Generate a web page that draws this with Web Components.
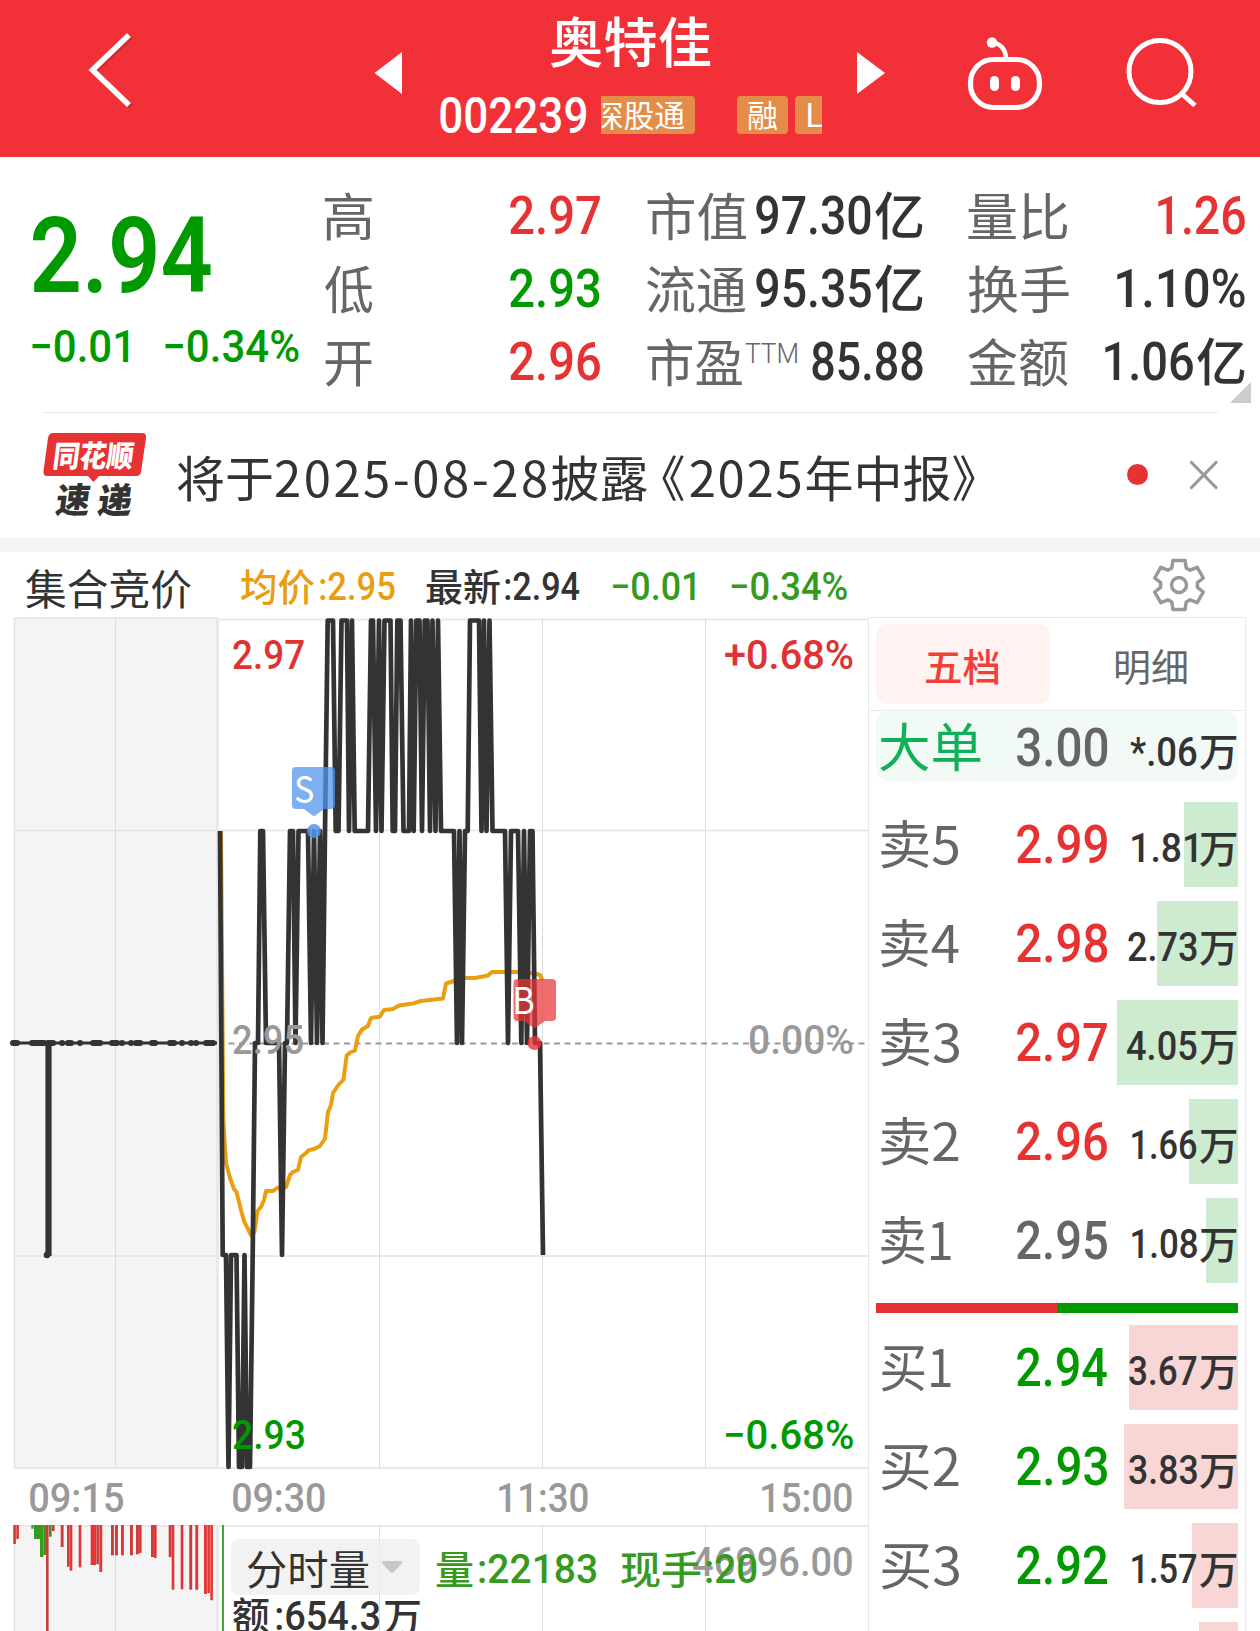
<!DOCTYPE html>
<html lang="zh-CN">
<head>
<meta charset="utf-8">
<title>奥特佳 002239</title>
<style>
  html, body { margin: 0; background: #fff; }
  body { width: 1260px; height: 1631px; overflow: hidden; }
</style>
</head>
<body>
<stock-page></stock-page>
<script>
const RED = '#e63232', GREEN = '#009a00', INK = '#333', GREY = '#666';
const FONTS = {
  num: 'Roboto, "Noto Sans CJK SC", sans-serif',
  cjk: '"Noto Sans CJK SC", sans-serif'
};
const ctx = document.createElement('canvas').getContext('2d');

/* Text condensed to an ink width; its box is the cap height, baseline at the bottom. */
class InkText extends HTMLElement {
  connectedCallback() {
    const a = (n, d) => this.getAttribute(n) ?? d;
    const h = +a('h'), size = +a('size', h / 0.711);
    const weight = a('weight', '500'), family = FONTS[a('font', 'num')];
    ctx.font = `${weight} ${size}px ${family}`;
    const m = ctx.measureText(this.textContent);
    const ink = m.actualBoundingBoxLeft + m.actualBoundingBoxRight;
    const w = +a('w', ink), k = w / ink;
    const base = size / 2 + (m.fontBoundingBoxAscent - m.fontBoundingBoxDescent) / 2;
    const at = a('at') ? a('at').split(',') : null;
    this.attachShadow({ mode: 'open' }).innerHTML = `<style>
      :host { display: block; flex: none; width: ${w}px; height: ${h}px; color: ${a('color', 'inherit')};
        ${at ? `position: absolute; left: ${at[0]}px; top: ${at[1]}px;` : ''} }
      .t { display: block; width: max-content; white-space: nowrap; font: ${weight} ${size}px/${size}px ${family};
        transform-origin: 0 0;
        transform: translate(${m.actualBoundingBoxLeft * k}px, ${h - base + +a('dy', 0)}px) scaleX(${k}) skewX(${a('skew', 0)}deg); }
    </style><span class="t"><slot></slot></span>`;
  }
}
customElements.define('ink-text', InkText);

const define = (name, render) => customElements.define(name, class extends HTMLElement {
  connectedCallback() { this.attachShadow({ mode: 'open' }).innerHTML = render(this); }
});

define('tag-chip', () => `<style>
  :host { display: flex; flex: none; box-sizing: border-box; height: 38px; padding: 7px 0 0 11px; border-radius: 4px;
    background: #e48d48; color: #fff; }
</style><slot></slot>`);

define('title-bar', () => `<style>
  :host { display: flex; height: 157px; background: #f13038; color: #fff; }
  svg { display: block; flex: none; }
  .mid { width: 455px; display: flex; flex-direction: column; padding-top: 16px; box-sizing: border-box; }
  .name { margin-left: 148px; }
  .code { display: flex; margin: 29px 0 0 38px; }
  .tags { display: flex; width: 221px; overflow: hidden; margin-left: 15px; }
</style>
<svg width="402" height="157" fill="none">
  <path d="M131 36.500L95 71.500L131 106.500" stroke="#a81e26" stroke-opacity=".45" stroke-width="5"/>
  <path d="M129 35L92.500 70L129 105" stroke="#fff" stroke-width="5.600"/>
  <path d="M402 52V94L374.500 73z" fill="#fff"/>
</svg>
<div class="mid">
  <ink-text class="name" w="161" h="51" size="54" font="cjk" dy="-3.500">奥特佳</ink-text>
  <div class="code">
    <ink-text w="146" h="36" style="margin-top:2px">002239</ink-text>
    <div class="tags">
      <tag-chip style="width:112px;margin-left:-18px"><ink-text w="91" h="25" size="31" weight="400" font="cjk" dy="-1">深股通</ink-text></tag-chip>
      <tag-chip style="width:51px;margin-left:42px"><ink-text w="29" h="25" size="31" weight="400" font="cjk" dy="-1">融</ink-text></tag-chip>
      <tag-chip style="width:110px;margin-left:7px;padding-left:13px"><ink-text w="16" h="24" size="32" weight="350" font="cjk">L</ink-text></tag-chip>
    </div>
  </div>
</div>
<svg width="403" height="157" viewBox="857 0 403 157" fill="none" stroke="#fff">
  <path d="M857 52V94L885 73z" fill="#fff" stroke="none"/>
  <rect x="970.500" y="59.500" width="69" height="48" rx="23" stroke-width="5.200"/>
  <path d="M1006 59C1006 50 1001 44 994 43" stroke-width="4.500"/>
  <circle cx="992" cy="42.500" r="5.200" fill="#fff" stroke="none"/>
  <rect x="990" y="76" width="9" height="15" rx="4.500" fill="#fff" stroke="none"/>
  <rect x="1011" y="76" width="9" height="15" rx="4.500" fill="#fff" stroke="none"/>
  <circle cx="1160" cy="71.500" r="31" stroke-width="5"/>
  <path d="M1182 94L1195 105.500" stroke-width="5"/>
</svg>`);

define('quote-panel', () => {
  const v = (w, c, t, unit = '') => `<div class="v"><ink-text w="${w}" h="37.500" color="${c}">${t}</ink-text>${unit}</div>`;
  const yi = '<ink-text w="48" h="38" size="51" font="cjk" dy="1.500" style="margin-left:4px">亿</ink-text>';
  const l = (w, t) => `<ink-text w="${w}" h="38" size="51" weight="400" font="cjk" color="${GREY}" dy="2">${t}</ink-text>`;
  const row = (a, b) => `<div class="r">${a}${b}</div>`;
  return `<style>
  :host { display: flex; height: 255px; padding-left: 32px; color: ${INK}; }
  .now { width: 293px; padding-top: 60px; color: ${GREEN}; flex: none; }
  .chg { display: flex; gap: 37px; margin-top: 38px; }
  .c { flex: none; display: flex; flex-direction: column; gap: 35px; padding-top: 39px; }
  .r { display: flex; justify-content: space-between; align-items: flex-end; height: 38px; }
  .v, .l { display: flex; align-items: flex-end; }
  svg { align-self: flex-end; margin: 0 0 9px -15px; }
</style>
<div class="now">
  <ink-text w="179" h="75" weight="600" dy="1">2.94</ink-text>
  <div class="chg"><ink-text w="96" h="32">−0.01</ink-text><ink-text w="134" h="32">−0.34%</ink-text></div>
</div>
<div class="c" style="width:275px">
  ${row(l(47, '高'), v(90, RED, '2.97'))}${row(l(48, '低'), v(90, GREEN, '2.93'))}${row(l(47, '开'), v(90, RED, '2.96'))}
</div>
<div class="c" style="width:276px;margin-left:47px">
  ${row(l(99, '市值'), v(115, INK, '97.30', yi))}
  ${row(l(99, '流通'), v(115, INK, '95.35', yi))}
  ${row(`<div class="l">${l(95, '市盈')}<ink-text w="52" h="19" weight="350" color="${GREY}" style="margin:0 0 17px 3px">TTM</ink-text></div>`, v(111, INK, '85.88'))}
</div>
<div class="c" style="width:277px;margin-left:45px">
  ${row(l(100, '量比'), v(87, RED, '1.26'))}
  ${row(l(101, '换手'), v(128, INK, '1.10%'))}
  ${row(l(100, '金额'), v(88, INK, '1.06', yi))}
</div>
<svg width="21" height="21"><path d="M21 0V21H0z" fill="#ccc"/></svg>`;
});

define('news-row', () => `<style>
  :host { display: flex; height: 125px; margin: 0 42px; border-top: 1.500px solid #ebebeb; box-sizing: border-box; height: 126px; }
  .logo { flex: none; width: 135px; display: grid; }
  .logo > * { grid-area: 1 / 1; }
  svg { display: block; }
  .icons { margin-left: auto; }
  .d { letter-spacing: 2.500px; }
  .q { margin-left: -12px; }
  .y { letter-spacing: 1.800px; margin-left: 3px; }
</style>
<div class="logo">
  <svg width="120" height="100" viewBox="42 413 120 100"><path d="M53 433H142Q147 433 146 438L141 472Q140.500 476 136 476H99L93.500 482L88 476H47Q43 476 43.500 471L48 438Q49 433 53 433z" fill="#e63232"/></svg>
  <ink-text w="79" h="25" size="30" weight="900" font="cjk" skew="-8" color="#fff" style="margin:30px 0 0 15px" dy="-1">同花顺</ink-text>
  <ink-text w="76" h="28" size="35" weight="900" font="cjk" skew="-8" color="#333" style="margin:73px 0 0 17px" dy="-1">速 递</ink-text>
</div>
<ink-text h="36" size="49" weight="400" font="cjk" color="${INK}" style="margin-top:48px">将于<span class="d">2025-08-28</span>披露<span class="q">《</span><span class="y">2025</span>年中报》</ink-text>
<svg class="icons" width="100" height="120" viewBox="1118 413 100 120">
  <circle cx="1137.500" cy="474.500" r="10.500" fill="#e63232"/>
  <path d="M1191.500 462.500L1216 487.500M1216 462.500L1191.500 487.500" stroke="#999" stroke-width="3.200" stroke-linecap="round"/>
</svg>`);

const gear = () => {
  const p = [];
  for (let i = 0; i < 6; i++) {
    for (const [d, r] of [[-23, 18.5], [-14, 25.3], [14, 25.3], [23, 18.5]]) {
      const t = (i * 60 + d) * Math.PI / 180;
      p.push((27 + r * Math.sin(t)).toFixed(1) + ' ' + (27 - r * Math.cos(t)).toFixed(1));
    }
  }
  return `M${p.join('L')}z`;
};

define('info-row', () => `<style>
  :host { display: flex; box-sizing: border-box; height: 79px; border-top: 14px solid #f4f4f4; color: ${INK}; }
  ink-text { margin-top: 21px; }
  svg { margin: 6px 54px 0 auto; overflow: visible; }
</style>
<ink-text w="165" h="30" size="42" font="cjk" weight="400" style="margin:22px 0 0 26px" dy="1">集合竞价</ink-text>
<ink-text w="74" h="28" size="38" font="cjk" weight="450" color="#e89e10" style="margin-left:50px">均价</ink-text>
<ink-text w="75" h="27.500" color="#e89e10" style="margin-left:5px">:2.95</ink-text>
<ink-text w="74" h="28" size="38" font="cjk" weight="450" style="margin-left:31px">最新</ink-text>
<ink-text w="75" h="27.500" style="margin-left:5px">:2.94</ink-text>
<ink-text w="83" h="27.500" color="#359a1e" style="margin-left:32px">−0.01</ink-text>
<ink-text w="116" h="27.500" color="#359a1e" style="margin-left:36px">−0.34%</ink-text>
<svg width="54" height="54" fill="none" stroke="#999" stroke-width="3.500" stroke-linejoin="round"><path d="${gear()}"/><circle cx="27" cy="27" r="7.500"/></svg>`);

/* Price levels of the minute chart and the series drawn on them. */
const Y = { T: 620.5, M: 831, Z: 1043, L: 1255, B: 1467 };
const PRICE = '220M 222.7L 226L 228.5B 231L 236.5L 239B 242B 244.5L 247B 250B 252.7L 255Z 258Z 260.3M 263M 266Z 279Z 282L 285Z 287Z 290M 293M 295.5Z 298.5M 308M 311Z 314M 317Z 320M 322.5Z 325M 327.7T 333T 335.7M 338.5M 341.5T 347T 349M 352T 354.7M 368M 371T 373T 376M 379T 381.5M 384.5T 390.5T 392.7M 395M 397.3T 400.5T 403.5M 409M 411T 413.7M 416.3T 419.5T 422M 424.7T 427.5T 430M 432.5T 435.5M 438T 441M 454M 457Z 459.5M 462Z 465M 467.7M 470T 479T 481.5M 484T 486.5M 489.5T 492.5M 505M 508Z 511M 518M 521.3Z 524M 527Z 530M 532.5M 535Z 540Z 543L'
  .split(' ').map(s => s.slice(0, -1) + ' ' + Y[s.slice(-1)]).join('L');
const AVG = '221 831L223.300 1120L226 1163L230 1178L234 1189L236.500 1192L241 1210L244 1221L251 1235L254.500 1232L257.500 1211L261 1207L264 1200L266 1191L273 1191L277 1188L286 1187L290 1175L293 1172L298 1170L301 1157L306 1153L309 1150L314 1149L320 1146L325 1138.500L328 1112L331 1105L333 1093L338 1085.500L343.500 1079.500L346.700 1055.500L350 1052.500L355 1050.500L358 1036L362 1029.500L368 1026L371 1018L380 1016.500L384 1010L393 1009L399 1005.500L413 1003.500L421 1001L443 998.500L446 983.500L454 981L466 978L475 978L488 975.500L492 972L497 972L520 972L535 973.500L540 975L542.500 980';
const TICKS = '13-17 32-44 48-53 62-62 68-71 80-80 93-100 112-117 122-122 131-131 136-140 152-155 170-174 182-182 191-191 196-196 206-213'
  .split(' ').map(s => { const [a, b] = s.split('-'); return `M${a} 1043H${+b + .1}`; }).join('');
const VOL = 'r40:49:252 R49:58:237 g94:102:206 G102:120:237 G120:130:291 G130:138:285 r138:147:513 g147:156:230 r156:165:213 r182:192:261 r201:210:320 R209:218:332 R236:245:322 R272:289:315 r289:298:313 R298:308:336 r333:343:286 r345:355:286 R363:373:286 r390:400:286 r408:418:283 R417:426:279 r453:463:291 R462:471:294 r506:516:291 R515:524:389 R542:551:388 r568:578:389 R586:596:389 R612:622:402 R622:631:399 R631:640:421'
  .split(' ').map(s => {
    const [a, b, c] = s.slice(1).split(':').map(Number);
    const fill = { r: '#c93c3a', R: '#e63434', g: '#3a922c', G: '#359c1e' }[s[0]];
    return `<rect x="${(a / 3).toFixed(1)}" y="1525" width="${((b - a) / 3 - (s[0] === 'G' ? 0 : .4)).toFixed(1)}" height="${(c / 3 - 65).toFixed(1)}" fill="${fill}"/>`;
  }).join('');

define('minute-chart', () => `<style>
  :host { display: block; position: relative; flex: none; width: 868px; height: 1014px; color: #999; }
  svg { display: block; }
  .sel { position: absolute; left: 231px; top: 922px; width: 189px; height: 56px; border-radius: 8px; background: rgba(236,236,236,.7);
    display: flex; align-items: center; gap: 12px; padding-left: 16px; box-sizing: border-box; }
</style>
<svg width="868" height="1014" viewBox="0 617 868 1014" fill="none">
  <path d="M14 618H218V1468H14zM14 1525H218V1640H14z" fill="#f4f4f4"/>
  <path d="M14 618H218M218 619.500H868M14 1468H868M218 1526H868M14 1526H218" stroke="#e9e9e9" stroke-width="2"/>
  <path d="M14 830.500H868M14 1256H868M14.500 618V1468M14.500 1525V1631" stroke="#e4e4e4" stroke-width="1.500"/>
  <path d="M217.500 618V1468M217.500 1525V1631" stroke="#e9e9e9" stroke-width="3"/>
  <path d="M115.500 618V1468M379.500 619V1468M542.500 619V1468M705.500 619V1468M115.500 1525V1631M379.500 1525V1631M542.500 1525V1631M705.500 1525V1631" stroke="#ddd"/>
  <path d="M219 1043.500H868" stroke="#999" stroke-width="1.800" stroke-dasharray="6 4.500" stroke-dashoffset="1"/>
  <path d="M${AVG}" stroke="#e8a012" stroke-width="4" stroke-linejoin="round"/>
  <path d="M${PRICE}" stroke="#333" stroke-width="4.700" stroke-linejoin="round"/>
  <path d="M13 1043H217" stroke="#333" stroke-width="3"/>
  <path d="${TICKS}" stroke="#333" stroke-width="6" stroke-linecap="round"/>
  <path d="M48.500 1043V1256" stroke="#333" stroke-width="6.200"/><circle cx="47" cy="1255" r="3.300" fill="#333"/>
  ${VOL}
  <path d="M223 1525V1631" stroke="#359c1e" stroke-width="1.800"/>
</svg>
<ink-text at="232.500,23" w="71" h="29" color="#df3232">2.97</ink-text>
<ink-text at="725,23" w="128" h="29" color="#df3232">+0.68%</ink-text>
<ink-text at="232.500,408" w="70" h="29">2.95</ink-text>
<ink-text at="750,408" w="103" h="29">0.00%</ink-text>
<ink-text at="232.500,803" w="71" h="29" color="${GREEN}">2.93</ink-text>
<ink-text at="725.500,803" w="127.500" h="29" color="${GREEN}">−0.68%</ink-text>
<svg width="868" height="1014" viewBox="0 617 868 1014" style="position:absolute;left:0;top:0">
  <g fill="#5295eb"><path d="M296 767H331Q335 767 335 771V805Q335 809 331 809H324L314 816.500L304 809H296Q292 809 292 805V771Q292 767 296 767z" opacity=".75"/><circle cx="314" cy="831" r="7" opacity=".85"/></g>
  <g fill="#e93438"><path d="M517.500 979H552Q556 979 556 983V1017Q556 1021 552 1021H545L534.500 1028.500L524 1021H517.500Q513.500 1021 513.500 1017V983Q513.500 979 517.500 979z" opacity=".72"/><circle cx="534.500" cy="1043" r="7" opacity=".8"/></g>
</svg>
<ink-text at="294.500,158.500" w="18.500" h="27" size="37" weight="400" font="cjk" color="#fff">S</ink-text>
<ink-text at="514.500,370" w="18.500" h="27" size="37" weight="400" font="cjk" color="#fff">B</ink-text>
<ink-text at="30,866" w="93" h="29.500">09:15</ink-text>
<ink-text at="233,866" w="92" h="29.500">09:30</ink-text>
<ink-text at="499,866" w="89" h="29.500">11:30</ink-text>
<ink-text at="762,866" w="90" h="29.500">15:00</ink-text>
<div class="sel"><ink-text w="122" h="31" size="41" weight="400" font="cjk" color="${INK}" dy="2">分时量</ink-text>
  <svg width="22" height="14"><path d="M2 1H20Q22 1 21 3L13 12Q11 14 9 12L1 3Q0 1 2 1z" fill="#c8c8c8"/></svg></div>
<ink-text at="692.500,929.500" w="159.500" h="29">46996.00</ink-text>
<ink-text at="436,936" w="37" h="30" size="39" font="cjk" weight="450" color="#359a1e" dy="1">量</ink-text>
<ink-text at="479,937" w="117" h="29" color="#359a1e">:22183</ink-text>
<ink-text at="621,936" w="80" h="30" size="39" font="cjk" weight="450" color="#359a1e" dy="1">现手</ink-text>
<ink-text at="706,937" w="51" h="29" color="#359a1e">:20</ink-text>
<ink-text at="233,983" w="37" h="30" size="39" font="cjk" weight="450" color="${INK}" dy="0.500">额</ink-text>
<ink-text at="276,984" w="103" h="29" color="${INK}">:654.3</ink-text>
<ink-text at="384,983" w="36" h="30" size="39" font="cjk" weight="450" color="${INK}" dy="1">万</ink-text>`);

define('book-row', el => {
  const a = n => el.getAttribute(n);
  const tint = a('side') === 'buy' ? '#f9d6d6' : '#cdebce';
  const big = el.hasAttribute('big');
  return `<style>
  :host { display: flex; align-items: flex-end; box-sizing: border-box; width: 362px; height: ${big ? 70 : 85}px; flex: none;
    padding: 0 2px ${big ? 15 : 24}px ${big ? 4 : 5}px;
    background: ${big ? '#f1faf5' : `linear-gradient(${tint}, ${tint}) right / ${a('bar')}px 100% no-repeat`}; border-radius: ${big ? 12 : 0}px; }
  .l { width: ${big ? 137 : 136}px; } .v { display: flex; margin-left: auto; gap: 3px; align-items: flex-end; }
</style>
<div class="l"><ink-text w="${a('lw') || 78}" h="38" size="52" weight="400" font="cjk" color="${big ? '#0fb058' : GREY}" dy="1.500">${a('label')}</ink-text></div>
<ink-text w="90.500" h="38" color="${a('color')}">${a('price')}</ink-text>
<div class="v"><ink-text w="${a('vw')}" h="28.500" color="${INK}">${a('vol')}</ink-text><ink-text w="36.500" h="28" size="39" font="cjk" weight="450" color="${INK}">万</ink-text></div>`;
});

define('order-book', () => {
  const rows = (side, list) => list.map(([label, price, color, vol, vw, bar, lw]) =>
    `<book-row side="${side}" label="${label}" price="${price}" color="${color}" vol="${vol}" vw="${vw}" bar="${bar}" lw="${lw || 78}"></book-row>`).join('');
  return `<style>
  :host { display: flex; flex-direction: column; box-sizing: border-box; width: 378px; height: 1014px; overflow: hidden;
    border: solid #eaeaea; border-width: 1.500px 1.500px 0; }
  .tabs { flex: none; display: flex; height: 93px; border-bottom: 1px solid #eaeaea; box-sizing: border-box; padding: 6px 7px 0; }
  .tab { height: 80px; width: 174px; box-sizing: border-box; padding: 28px 0 0 50px; border-radius: 10px; color: ${GREY}; }
  .on { background: #fff3f2; color: #f0403a; }
  .rows { display: flex; flex-direction: column; gap: 14px; padding: 0 7px; }
  .split { flex: none; display: flex; height: 10px; margin: 6.500px 0 -2.500px; }
</style>
<div class="tabs">
  <div class="tab on"><ink-text w="73" h="28" size="38" weight="450" font="cjk" dy="1">五档</ink-text></div>
  <div class="tab" style="padding-left:66px"><ink-text w="71" h="28" size="38" weight="400" font="cjk" dy="1">明细</ink-text></div>
</div>
<div class="rows">
  <book-row big label="大单" lw="101" price="3.00" color="${GREY}" vol="*.06" vw="67" style="margin-bottom:6.500px"></book-row>
  ${rows('sell', [
    ['卖5', '2.99', RED, '1.81', 65, 54], ['卖4', '2.98', RED, '2.73', 69, 81], ['卖3', '2.97', RED, '4.05', 70, 121],
    ['卖2', '2.96', RED, '1.66', 65, 49], ['卖1', '2.95', GREY, '1.08', 65, 32, 70]])}
  <div class="split"><i style="width:180.500px;background:#e63232"></i><i style="flex:1;background:${GREEN}"></i></div>
  ${rows('buy', [
    ['买1', '2.94', GREEN, '3.67', 68, 109, 70], ['买2', '2.93', GREEN, '3.83', 68, 114],
    ['买3', '2.92', GREEN, '1.57', 65, 46]])}
  <book-row side="buy" label="买4" lw="78" price="2.91" color="${GREEN}" vol="1.35" vw="65" bar="39"></book-row>
</div>`;
});

define('stock-page', () => `<style>
  :host { display: block; width: 1260px; height: 1631px; overflow: hidden; background: #fff; }
  .main { display: flex; }
</style>
<title-bar></title-bar>
<quote-panel></quote-panel>
<news-row></news-row>
<info-row></info-row>
<div class="main"><minute-chart></minute-chart><order-book></order-book></div>`);
</script>
</body>
</html>
